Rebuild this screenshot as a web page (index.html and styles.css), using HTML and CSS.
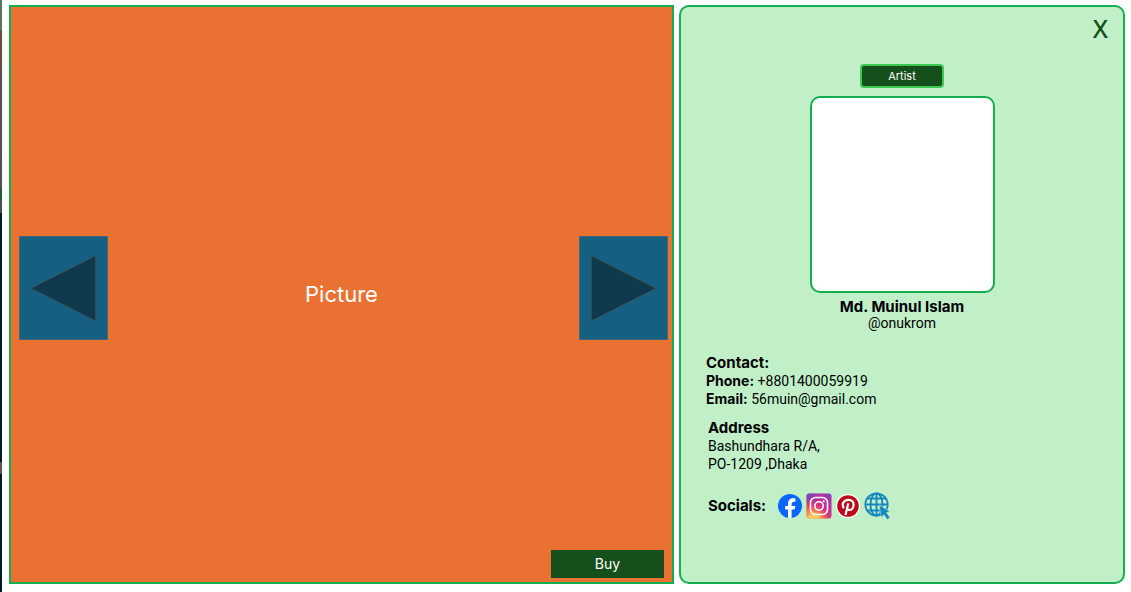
FILE: index.html
```html
<!DOCTYPE html>
<html lang="en">
<head>
<meta charset="utf-8">
<meta name="viewport" content="width=device-width, initial-scale=1">
<title>Artist</title>
<link rel="stylesheet" href="styles.css">
</head>
<body>
<div class="page">
  <div class="edge"></div>
  <main class="viewer">
    <section class="gallery">
      <div class="stage">
        <button class="arrow" type="button" aria-label="Previous picture">
          <svg viewBox="0 0 89 104"><path d="M11 52.5 77.500 19V86Z"/></svg>
        </button>
        <div class="caption">Picture</div>
        <button class="arrow" type="button" aria-label="Next picture">
          <svg viewBox="0 0 89 104"><path d="M78 52.500 11.500 19V86Z"/></svg>
        </button>
      </div>
      <button class="buy" type="button">Buy</button>
    </section>
    <aside class="card">
      <button class="close" type="button" aria-label="Close">X</button>
      <div class="profile">
        <button class="badge" type="button">Artist</button>
        <div class="photo"></div>
        <h1 class="name">Md. Muinul Islam</h1>
        <p class="handle">@onukrom</p>
      </div>
      <section class="contact">
        <h2 class="heading">Contact:</h2>
        <p class="line"><b class="label">Phone:</b> +8801400059919</p>
        <p class="line"><b class="label">Email:</b> 56muin@gmail.com</p>
      </section>
      <section class="address">
        <h2 class="heading">Address</h2>
        <p class="line">Bashundhara R/A,</p>
        <p class="line">PO-1209 ,Dhaka</p>
      </section>
      <section class="socials">
        <h2 class="heading">Socials:</h2>
        <div class="links">
          <a href="#facebook" aria-label="Facebook">
            <svg viewBox="0 0 26 26"><circle cx="13" cy="13" r="12" fill="#0866ff"/><path fill="#fff" d="M11 25V16.500H8.200V13H11V11.200C11 7.200 12.800 5.300 16.500 5.300c.8 0 1.500.1 2 .2V8.800h-1.400c-1.900 0-2.500.8-2.500 2.600V13h3.700l-.7 3.500h-3V25Z"/></svg>
          </a>
          <a href="#instagram" aria-label="Instagram">
            <svg viewBox="0 0 26 26">
              <defs>
                <linearGradient id="ig-base" x1="0" y1="1" x2="1" y2="0"><stop offset="0" stop-color="#fb8b34"/><stop offset=".3" stop-color="#ef4255"/><stop offset=".6" stop-color="#c62f92"/><stop offset="1" stop-color="#8b3bc4"/></linearGradient>
                <radialGradient id="ig-warm" cx=".3" cy="1.060" r=".6"><stop offset="0" stop-color="#ffdc70"/><stop offset=".35" stop-color="#ffc85a"/><stop offset="1" stop-color="#fb6b40" stop-opacity="0"/></radialGradient>
                <radialGradient id="ig-cool" cx="0" cy="0" r=".6"><stop offset="0" stop-color="#4a50d0"/><stop offset="1" stop-color="#8b3bc4" stop-opacity="0"/></radialGradient>
              </defs>
              <rect x=".5" y=".5" width="25" height="25" rx="3" fill="url(#ig-base)"/>
              <rect x=".5" y=".5" width="25" height="25" rx="3" fill="url(#ig-warm)"/>
              <rect x=".5" y=".5" width="25" height="25" rx="3" fill="url(#ig-cool)"/>
              <g fill="none" stroke="#fff" stroke-width="1.600"><rect x="4.500" y="4.500" width="17" height="17" rx="5"/><circle cx="13" cy="13" r="4.200"/></g>
              <circle cx="17.700" cy="8.300" r="1.100" fill="#fff"/>
            </svg>
          </a>
          <a href="#pinterest" aria-label="Pinterest">
            <svg viewBox="0 0 26 26"><circle cx="13" cy="13" r="12" fill="#fff"/><circle cx="13" cy="13" r="10.800" fill="#bd081c"/><path d="M9 15.200C6.400 12 8.200 6.800 13.400 6.800c3.500 0 5.300 2.200 5.200 4.900-.1 3-1.800 5.300-4.200 5.300-1.300 0-2.100-.7-2.400-1.500M13.300 10.300 10.500 22" fill="none" stroke="#fff" stroke-width="2.200"/></svg>
          </a>
          <a href="#website" aria-label="Website">
            <svg viewBox="0 0 26 28"><g fill="none" stroke="#1687bd" stroke-width="1.800"><circle cx="12.500" cy="12.500" r="11.200"/><ellipse cx="12.500" cy="12.500" rx="6" ry="11.200"/><path d="M12.500 1.300V23.700M1.300 12.500H23.700M3.500 6.500H21.500M3.500 18.500H21.500"/></g><path d="M15 13 26 19.300 22.500 20.700 26 25.600 23.300 27.600 19.900 22.700 17.400 25.500Z" fill="#1687bd" stroke="#c1f0c8" stroke-width=".6"/></svg>
          </a>
        </div>
      </section>
    </aside>
  </div>
</div>
</body>
</html>
```

FILE: styles.css
```css
* {
  box-sizing: border-box;
}

body {
  margin: 0;
  background: #fff;
  color: #000;
  font-family: Inter, "Open Sans", sans-serif;
}

button {
  margin: 0;
  padding: 0;
  border: 0;
  font: inherit;
  cursor: pointer;
}

h1,
h2,
p {
  margin: 0;
}

svg {
  display: block;
  width: 100%;
}

.page {
  display: flex;
  min-height: 100vh;
}

.edge {
  width: 2px;
  background: linear-gradient(#5a7260 0 5%, #665046 5% 12%, #555052 12% 26%, #51515d 26% 32%, #225b36 32% 34%, #4d504f 34% 36%, #021b2c 36% 78%, #5b5354 78% 80%, #021b2c 80%);
}

.viewer {
  flex: 1;
  display: grid;
  grid-template-columns: 665fr 446fr;
  gap: 5px;
  padding: 5px 6px 8px 7px;
}

.gallery {
  display: flex;
  flex-direction: column;
  padding: 19px 4px 4px 8px;
  border: 2px solid #14ae50;
  background: #e97132;
}

.stage {
  flex: 1;
  display: flex;
  align-items: center;
  justify-content: space-between;
}

.arrow {
  width: 89px;
  border: 1px solid #42657a;
  background: #156082;
}

.arrow path {
  fill: #0f3a4e;
  stroke: #42505a;
  stroke-width: 1px;
}

.caption {
  padding: 12px 4px 0 0;
  color: #fff;
  font-size: 22px;
  line-height: 28px;
}

.buy {
  align-self: flex-end;
  width: 113px;
  margin-right: 4px;
  background: #15501c;
  color: #fff;
  font-size: 14px;
  line-height: 28px;
}

.card {
  display: flex;
  flex-direction: column;
  padding: 7px 15px 24px 25px;
  border: 2px solid #14ae50;
  border-radius: 10px;
  background: #c1f0c8;
}

.close {
  align-self: flex-end;
  background: none;
  color: #15501c;
  font-family: "Noto Sans", sans-serif;
  font-size: 25px;
  font-weight: 500;
  line-height: 28px;
}

.profile {
  display: flex;
  flex-direction: column;
  align-items: center;
  margin: 22px 0 24px;
  padding-right: 10px;
}

.badge {
  width: 84px;
  margin-bottom: 8px;
  border: 2px solid #3bca50;
  border-radius: 4px;
  background: #15501c;
  color: #fff;
  font-size: 11px;
  line-height: 20px;
}

.photo {
  width: 185px;
  height: 197px;
  margin-bottom: 5px;
  border: 2px solid #14ae50;
  border-radius: 10px;
  background: #fff;
}

.name,
.heading {
  font-size: 15px;
  font-weight: 700;
  line-height: 18px;
}

.handle,
.line {
  font-family: Roboto, sans-serif;
  font-size: 14px;
}

.handle {
  line-height: 14px;
}

.line {
  line-height: 18px;
}

.label {
  font-family: Inter, sans-serif;
}

.address {
  margin: 11px 0 19px;
  padding-left: 2px;
}

.socials {
  display: flex;
  align-items: center;
  gap: 11px;
  padding-left: 2px;
}

.links {
  display: flex;
  align-items: center;
  gap: 3px;
}

.links a {
  width: 26px;
}
```
